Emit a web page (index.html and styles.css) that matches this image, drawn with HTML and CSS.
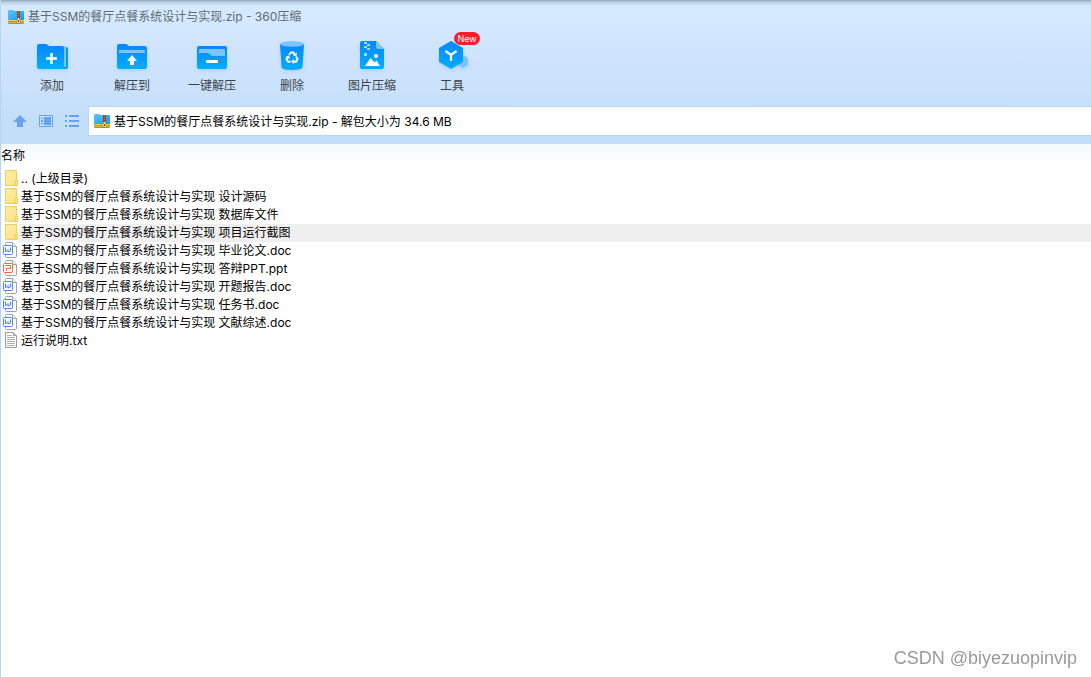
FILE: index.html
```html
<!DOCTYPE html>
<html lang="zh-CN">
<head>
<meta charset="utf-8">
<meta name="viewport" content="width=device-width, initial-scale=1">
<title>360压缩</title>
<link rel="stylesheet" href="styles.css">
</head>
<body>
<svg class="defs" aria-hidden="true">
  <defs>
    <linearGradient id="blue" x1="0" y1="0" x2="0" y2="1"><stop offset="0" stop-color="#0787ff"/><stop offset="1" stop-color="#02adff"/></linearGradient>
    <linearGradient id="sky" x1="0" y1="0" x2="1" y2="1"><stop offset="0" stop-color="#5ac8fa"/><stop offset="1" stop-color="#1594ee"/></linearGradient>
    <linearGradient id="yellow" x1="0" y1="0" x2="1" y2="1"><stop offset="0" stop-color="#ffeeab"/><stop offset="1" stop-color="#ffe07e"/></linearGradient>
    <symbol id="zip" viewBox="0 0 16 14">
      <path d="M0 1Q0 0 1 0H5l1.500 1H15q1 0 1 1v9H0z" fill="url(#sky)"/>
      <path d="M0 10h16v1H0z" fill="#ffca3a"/>
      <path d="M0 11h16v1.500H0z" fill="#f48c17"/>
      <path d="M0 12.500h16V13q0 1-1 1H1q-1 0-1-1z" fill="#79b52b"/>
      <path d="M9 1h3v9H9z" fill="#8c4a20"/>
      <path d="M10.500 1v7" stroke="#c98048" stroke-dasharray="1 1"/>
      <path d="M9.500 8h2l.8 5H8.700z" fill="#fff2c5" stroke="#a05b20" stroke-width=".5"/>
      <path d="M10 10h1v2h-1z" fill="#753710"/>
    </symbol>
    <symbol id="folder" viewBox="0 0 14 16">
      <path d="M.5.5h11v9.500h1v5.500H.5z" fill="url(#yellow)" stroke="#f0cd60"/>
      <path d="M10.500 10v5" stroke="#f0cd60"/>
    </symbol>
    <symbol id="sheet" viewBox="0 0 14 16">
      <path d="M2.500 3V1.500q0-1 1-1H9.500L13.500 4.500v10q0 1-1 1h-9q-1 0-1-1V12" fill="#fff" stroke="#a0a0a0"/>
      <path d="M9.500.5v4h4" fill="#f2f2f2" stroke="#a0a0a0"/>
    </symbol>
    <symbol id="doc" viewBox="0 0 14 16">
      <use href="#sheet"/>
      <rect x=".5" y="3.500" width="9" height="9" rx="1" fill="#fff" stroke="#4b86e8"/>
      <path d="M2.500 5.500v4.500L5 7.500V10l2.500-1V5.500" fill="none" stroke="#4b86e8"/>
    </symbol>
    <symbol id="ppt" viewBox="0 0 14 16">
      <use href="#sheet"/>
      <rect x=".5" y="3.500" width="9" height="9" rx="1" fill="#fff" stroke="#ee6a42"/>
      <path d="M2 5.500h5.500v3H3.500V11" fill="none" stroke="#ee6a42"/>
    </symbol>
    <symbol id="txt" viewBox="0 0 14 16">
      <path d="M.5.500h8l3 3v12H.5z" fill="#fff" stroke="#9a9a9a"/>
      <path d="M8.500.5v3h3" fill="#ddd" stroke="#9a9a9a"/>
      <path d="M2 3.500h5M2 5.500h8M2 7.500h8M2 9.500h8M2 11.500h8M2 13.500h8" stroke="#b0b0b0"/>
    </symbol>
  </defs>
</svg>

<div class="window">
  <header class="chrome">
    <div class="titlebar">
      <svg class="zip-icon" aria-hidden="true"><use href="#zip"/></svg>
      <span>基于SSM的餐厅点餐系统设计与实现.zip - 360压缩</span>
    </div>

    <div class="toolbar" role="toolbar" aria-label="工具栏">
      <button class="tool" type="button">
        <svg class="tool-icon" viewBox="0 0 32 32" aria-hidden="true">
          <path d="M20 5h10q2 0 2 2v18q0 2-2 2H18z" fill="#0798ff"/>
          <path d="M20 4h8q2 0 2 2v19H20z" fill="#7cc4ff"/>
          <path d="M1 4q0-2 2-2h7l3 2h13q2 0 2 2v21H3q-2 0-2-2z" fill="url(#blue)"/>
          <path d="M15.500 11v11M10 16.500h11" stroke="#fff" stroke-width="2.600"/>
        </svg>
        <span>添加</span>
      </button>
      <button class="tool" type="button">
        <svg class="tool-icon" viewBox="0 0 32 32" aria-hidden="true">
          <path d="M1 4q0-2 2-2h7l3 2h16q2 0 2 2v19q0 2-2 2H3q-2 0-2-2z" fill="url(#blue)"/>
          <path d="M3 11V9q0-1 1-1h24q1 0 1 1v2z" fill="#7cc4ff"/>
          <path d="m16 13 5 6h-3v4h-4v-4h-3z" fill="#fff"/>
        </svg>
        <span>解压到</span>
      </button>
      <button class="tool" type="button">
        <svg class="tool-icon" viewBox="0 0 32 32" aria-hidden="true">
          <rect x="1" y="4" width="30" height="23" rx="2" fill="url(#blue)"/>
          <path d="M3 10V8q0-1 1-1h24q1 0 1 1v6H16l-4-3H3z" fill="#7cc4ff"/>
          <rect x="10" y="18" width="12" height="3" rx="1" fill="#fff"/>
        </svg>
        <span>一键解压</span>
      </button>
      <button class="tool" type="button">
        <svg class="tool-icon" viewBox="0 0 32 32" aria-hidden="true">
          <path d="M4 2h24l-1.500 23q-.2 3-10.500 3T5.500 25z" fill="url(#blue)"/>
          <ellipse cx="16" cy="2" rx="12" ry="2.800" fill="#7cc4ff"/>
          <path d="m13 13 2-2.500h2.500l1.500 2.500M20 14.500l1.500 2.500-1.500 2.800h-3M14.500 19.800H12L10.500 17l1.500-2.500" fill="none" stroke="#fff" stroke-width="2"/>
          <path d="m17 13.500 3.500.5.500-3.500zM18 17v5l-3-2.500zM9.500 15l3.500-1.500 1 3.500z" fill="#fff"/>
        </svg>
        <span>删除</span>
      </button>
      <button class="tool" type="button">
        <svg class="tool-icon" viewBox="0 0 32 32" aria-hidden="true">
          <path d="M4 1q0-2 2-2h14l8 8v18q0 2-2 2H6q-2 0-2-2z" fill="url(#blue)"/>
          <path d="M20-1v6q0 2 2 2h6z" fill="#7cc4ff"/>
          <path d="M8 0h3v2H8zM11 2h3v2h-3zM8 4h3v2H8zM11 6h3v2h-3zM8 11h3v3H8z" fill="#a8d9ff"/>
          <circle cx="20" cy="14" r="2" fill="#fff"/>
          <path d="m9 24 5.500-8 4 4.500 2-2L24 24z" fill="#fff"/>
        </svg>
        <span>图片压缩</span>
      </button>
      <button class="tool" type="button">
        <svg class="tool-icon" viewBox="0 0 32 32" aria-hidden="true">
          <path d="m27 13 5 3v7l-5 3-5-3v-7z" fill="#7cc4ff"/>
          <path d="M15-1 27 6v14l-12 7L3 20V6z" fill="url(#blue)"/>
          <path d="m9.500 9 5.500 4 5.500-4M15 13v6" fill="none" stroke="#fff" stroke-width="2.200"/>
        </svg>
        <span>工具</span>
        <em class="badge">New</em>
      </button>
    </div>

    <div class="pathbar">
      <div class="nav">
        <button class="nav-button" type="button" aria-label="向上"><svg viewBox="0 0 16 14" aria-hidden="true"><path d="m8 1 7 7h-4v5H5V8H1z" fill="#68a1ee"/></svg></button>
        <button class="nav-button" type="button" aria-label="预览"><svg viewBox="0 0 16 14" aria-hidden="true"><path d="M1.500 1.500h13v11h-13z" fill="none" stroke="#68a1ee"/><path d="M3 4h2v1H3zM3 6h2v2H3zM3 9h2v1H3zM6 3h7v8H6z" fill="#68a1ee"/></svg></button>
        <button class="nav-button" type="button" aria-label="列表"><svg viewBox="0 0 16 14" aria-hidden="true"><path d="M1 1h2v2H1zM5 1h10v2H5zM1 6h2v2H1zM5 6h10v2H5zM1 11h2v2H1zM5 11h10v2H5z" fill="#68a1ee"/></svg></button>
      </div>
      <label class="address">
        <svg class="zip-icon" aria-hidden="true"><use href="#zip"/></svg>
        <input type="text" aria-label="路径" value="基于SSM的餐厅点餐系统设计与实现.zip - 解包大小为 34.6 MB">
      </label>
    </div>
  </header>

  <main class="content">
    <table class="files">
      <thead><tr><th colspan="2" scope="col">名称</th></tr></thead>
      <tbody>
        <tr><td class="kind"><svg aria-hidden="true"><use href="#folder"/></svg></td><td>.. (上级目录)</td></tr>
        <tr><td class="kind"><svg aria-hidden="true"><use href="#folder"/></svg></td><td>基于SSM的餐厅点餐系统设计与实现 设计源码</td></tr>
        <tr><td class="kind"><svg aria-hidden="true"><use href="#folder"/></svg></td><td>基于SSM的餐厅点餐系统设计与实现 数据库文件</td></tr>
        <tr class="selected"><td class="kind"><svg aria-hidden="true"><use href="#folder"/></svg></td><td>基于SSM的餐厅点餐系统设计与实现 项目运行截图</td></tr>
        <tr><td class="kind office"><svg aria-hidden="true"><use href="#doc"/></svg></td><td>基于SSM的餐厅点餐系统设计与实现 毕业论文.doc</td></tr>
        <tr><td class="kind office"><svg aria-hidden="true"><use href="#ppt"/></svg></td><td>基于SSM的餐厅点餐系统设计与实现 答辩PPT.ppt</td></tr>
        <tr><td class="kind office"><svg aria-hidden="true"><use href="#doc"/></svg></td><td>基于SSM的餐厅点餐系统设计与实现 开题报告.doc</td></tr>
        <tr><td class="kind office"><svg aria-hidden="true"><use href="#doc"/></svg></td><td>基于SSM的餐厅点餐系统设计与实现 任务书.doc</td></tr>
        <tr><td class="kind office"><svg aria-hidden="true"><use href="#doc"/></svg></td><td>基于SSM的餐厅点餐系统设计与实现 文献综述.doc</td></tr>
        <tr><td class="kind"><svg aria-hidden="true"><use href="#txt"/></svg></td><td>运行说明.txt</td></tr>
      </tbody>
    </table>
  </main>
  <div class="watermark">CSDN @biyezuopinvip</div>
</div>
</body>
</html>
```
FILE: styles.css
```css
* { box-sizing: border-box; }

body {
  margin: 0;
  background: #fff;
  color: #000;
  font: 12px/18px Inter, "Noto Sans CJK SC", sans-serif;
}

button, input { font: inherit; color: inherit; }
button { padding: 0; border: 0; background: none; }
svg { display: block; }
.defs { position: absolute; width: 0; height: 0; }

.window {
  display: flex;
  flex-direction: column;
  min-height: 100vh;
  border-left: 1px solid #b5d5f5;
}

.chrome {
  padding-bottom: 8px;
  background:
    linear-gradient(#8fa5b9 0, #b8cee2 2px, #d6eaff00 6px),
    linear-gradient(#d7ebff, #cfe4fd 60px, #c2def9 130px);
}

.titlebar {
  display: flex;
  align-items: center;
  gap: 4px;
  height: 32px;
  padding: 1px 0 0 7px;
  color: #626a73;
}

.zip-icon { flex: none; width: 16px; height: 14px; }

.toolbar { display: flex; padding-left: 11px; }

.tool {
  position: relative;
  display: flex;
  flex-direction: column;
  align-items: center;
  gap: 3px;
  width: 80px;
  height: 74px;
  padding-top: 10px;
  color: #3c4248;
}

.tool-icon {
  width: 32px;
  height: 32px;
  overflow: visible;
  filter: drop-shadow(0 2px 2px #6bb5f855);
}

.badge {
  position: absolute;
  top: 0;
  left: 42px;
  width: 26px;
  border-radius: 7px;
  background: #fb1c2c;
  color: #fff;
  font-size: 9px;
  font-style: normal;
  line-height: 13px;
}

.pathbar { display: flex; align-items: center; }

.nav { display: flex; gap: 10px; padding: 0 8px 0 11px; }
.nav-button { width: 16px; height: 14px; }

.address {
  display: flex;
  flex: 1;
  align-items: center;
  gap: 4px;
  height: 30px;
  padding-left: 5px;
  border: 1px solid #b8d7f5;
  border-right: 0;
  background: #fff;
}

.address input {
  flex: 1;
  min-width: 0;
  padding: 1px 0 0;
  border: 0;
  outline: 0;
  background: none;
}

.content { flex: 1; background: linear-gradient(#f3f9ff, #fff 24px); }

.files { width: 100%; border-collapse: collapse; }
.files th { height: 26px; padding: 0 0 3px; font-weight: 400; text-align: left; }
.files td { height: 18px; padding: 0 0 0 2px; line-height: 18px; }
.files .kind { width: 18px; padding-left: 4px; vertical-align: top; }
.files .office { padding-left: 2px; }
.kind svg { width: 14px; height: 16px; }
.selected td:last-child { background: #efefef; }

.watermark {
  position: fixed;
  right: 14px;
  bottom: 8px;
  color: #999;
  font: 18px/22px "Liberation Sans", sans-serif;
}
```
